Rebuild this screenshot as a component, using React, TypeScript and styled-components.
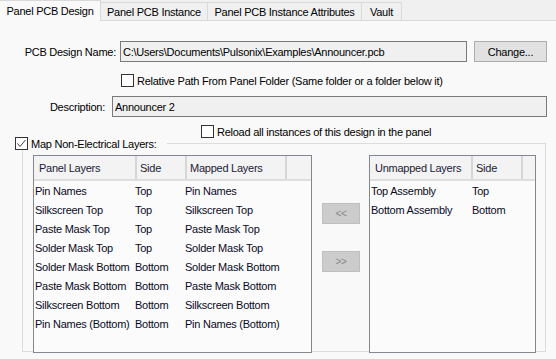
import React from 'react';
import styled, { createGlobalStyle } from 'styled-components';

const GlobalStyle = createGlobalStyle`
  html, body {
    margin: 0;
    padding: 0;
    background: #f0f0f0;
  }
  body {
    font-family: 'Liberation Sans', Arial, sans-serif;
    font-size: 11px;
    letter-spacing: -0.25px;
    color: #000;
  }
`;

const Window = styled.div`
  width: 556px;
  height: 359px;
  display: flex;
  flex-direction: column;
  overflow: hidden;
  background: #f0f0f0;
`;

const TabStrip = styled.div`
  display: flex;
  align-items: flex-end;
  height: 20px;
  flex-shrink: 0;
`;

const Tab = styled.div<{ $active?: boolean; $width: number }>`
  width: ${(p) => p.$width}px;
  height: ${(p) => (p.$active ? 21 : 18)}px;
  margin-bottom: ${(p) => (p.$active ? -1 : 0)}px;
  box-sizing: border-box;
  display: flex;
  align-items: center;
  justify-content: center;
  background: ${(p) => (p.$active ? '#f9f9f9' : '#f0f0f0')};
  border-top: 1px solid #d9d9d9;
  border-right: 1px solid #d9d9d9;
  position: relative;
  z-index: ${(p) => (p.$active ? 1 : 0)};
  white-space: nowrap;
`;

const Panel = styled.div`
  flex: 1;
  background: #f9f9f9;
  border-top: 1px solid #d9d9d9;
  display: flex;
  flex-direction: column;
`;

const Row = styled.div<{ $mt: number; $ml?: number }>`
  display: flex;
  align-items: center;
  margin-top: ${(p) => p.$mt}px;
  margin-left: ${(p) => p.$ml || 0}px;
`;

const Label = styled.div<{ $width: number; $gap: number }>`
  width: ${(p) => p.$width}px;
  margin-right: ${(p) => p.$gap}px;
  text-align: right;
  white-space: nowrap;
`;

const TextBox = styled.div<{ $width: number }>`
  width: ${(p) => p.$width}px;
  height: 21px;
  box-sizing: border-box;
  border: 1px solid #7a7a7a;
  background: #f0f0f0;
  padding-left: 2px;
  display: flex;
  align-items: center;
  white-space: nowrap;
  overflow: hidden;
`;

const PushButton = styled.div`
  width: 73px;
  height: 21px;
  margin-left: 7px;
  box-sizing: border-box;
  border: 1px solid #adadad;
  background: #e1e1e1;
  display: flex;
  align-items: center;
  justify-content: center;
`;

const Box = styled.div`
  width: 13px;
  height: 13px;
  box-sizing: border-box;
  border: 1px solid #333;
  background: #fff;
  display: flex;
  align-items: center;
  justify-content: center;
  flex-shrink: 0;
`;

const CheckLabel = styled.span`
  margin-left: 3px;
  white-space: nowrap;
`;

const Check = ({ checked, label }: { checked?: boolean; label: string }) => (
  <>
    <Box>
      {checked && (
        <svg width="11" height="11" viewBox="0 0 11 11">
          <polyline points="1.5,5.5 4,8.5 9.5,2" fill="none" stroke="#404040" strokeWidth="1" />
        </svg>
      )}
    </Box>
    <CheckLabel>{label}</CheckLabel>
  </>
);

const Group = styled.div`
  position: relative;
  margin: 5px 0 0 22px;
  width: 524px;
  box-sizing: border-box;
  border: 1px solid #dcdcdc;
  padding: 11px 9px 0 10px;
`;

const Legend = styled.div`
  position: absolute;
  top: -7px;
  left: -8px;
  display: flex;
  align-items: center;
  background: #f9f9f9;
  padding-right: 10px;
`;

const Lists = styled.div`
  display: flex;
  align-items: flex-start;
  margin-bottom: -2px;
`;

const ListView = styled.div<{ $width: number }>`
  width: ${(p) => p.$width}px;
  height: 198px;
  box-sizing: border-box;
  border: 1px solid #828790;
  background: #fbfbfb;
  display: flex;
  flex-direction: column;
`;

const HeaderRow = styled.div<{ $cols: string }>`
  display: grid;
  grid-template-columns: ${(p) => p.$cols};
  height: 25px;
  box-sizing: border-box;
  border-bottom: 2px solid #dedede;
  background: #f3f3f3;
`;

const HeadCell = styled.div`
  border-right: 2px solid #d6d6d6;
  padding-left: 3px;
  display: flex;
  align-items: center;
  white-space: nowrap;
  overflow: hidden;
  color: #1c1a36;

  &:first-child {
    padding-left: 5px;
  }
  &:last-child {
    border-right: none;
  }
`;

const DataRow = styled.div<{ $cols: string }>`
  display: grid;
  grid-template-columns: ${(p) => p.$cols};
  height: 19px;
  align-items: center;
  color: #0a0a1e;
  white-space: nowrap;

  & > span:first-child {
    padding-left: 1px;
  }
`;

const MoveColumn = styled.div`
  width: 38px;
  margin: 0 9px 0 10px;
  padding-top: 48px;
  display: flex;
  flex-direction: column;
  gap: 27px;
`;

const MoveButton = styled.div`
  height: 21px;
  box-sizing: border-box;
  border: 1px solid #bfbfbf;
  background: #cccccc;
  color: #838383;
  font-size: 10px;
  display: flex;
  align-items: center;
  justify-content: center;
`;

const mapped = [
  ['Pin Names', 'Top', 'Pin Names'],
  ['Silkscreen Top', 'Top', 'Silkscreen Top'],
  ['Paste Mask Top', 'Top', 'Paste Mask Top'],
  ['Solder Mask Top', 'Top', 'Solder Mask Top'],
  ['Solder Mask Bottom', 'Bottom', 'Solder Mask Bottom'],
  ['Paste Mask Bottom', 'Bottom', 'Paste Mask Bottom'],
  ['Silkscreen Bottom', 'Bottom', 'Silkscreen Bottom'],
  ['Pin Names (Bottom)', 'Bottom', 'Pin Names (Bottom)'],
];

const unmapped = [
  ['Top Assembly', 'Top'],
  ['Bottom Assembly', 'Bottom'],
];

const App = () => {
  return (
    <Window>
      <GlobalStyle />
      <TabStrip>
        <Tab $active $width={101}>Panel PCB Design</Tab>
        <Tab $width={107}>Panel PCB Instance</Tab>
        <Tab $width={154}>Panel PCB Instance Attributes</Tab>
        <Tab $width={40}>Vault</Tab>
      </TabStrip>
      <Panel>
        <Row $mt={20}>
          <Label $width={116} $gap={4}>PCB Design Name:</Label>
          <TextBox $width={347}>C:\Users\Documents\Pulsonix\Examples\Announcer.pcb</TextBox>
          <PushButton>Change...</PushButton>
        </Row>
        <Row $mt={12} $ml={121}>
          <Check label="Relative Path From Panel Folder (Same folder or a folder below it)" />
        </Row>
        <Row $mt={9}>
          <Label $width={105} $gap={7}>Description:</Label>
          <TextBox $width={435}>Announcer 2</TextBox>
        </Row>
        <Row $mt={8} $ml={201}>
          <Check label="Reload all instances of this design in the panel" />
        </Row>
        <Group>
          <Legend>
            <Check checked label="Map Non-Electrical Layers:" />
          </Legend>
          <Lists>
            <ListView $width={279}>
              <HeaderRow $cols="103px 50px 100px 1fr">
                <HeadCell>Panel Layers</HeadCell>
                <HeadCell>Side</HeadCell>
                <HeadCell>Mapped Layers</HeadCell>
                <HeadCell />
              </HeaderRow>
              {mapped.map((r) => (
                <DataRow key={r[0]} $cols="101px 50px 1fr">
                  <span>{r[0]}</span>
                  <span>{r[1]}</span>
                  <span>{r[2]}</span>
                </DataRow>
              ))}
            </ListView>
            <MoveColumn>
              <MoveButton>&lt;&lt;</MoveButton>
              <MoveButton>&gt;&gt;</MoveButton>
            </MoveColumn>
            <ListView $width={167}>
              <HeaderRow $cols="103px 50px 1fr">
                <HeadCell>Unmapped Layers</HeadCell>
                <HeadCell>Side</HeadCell>
                <HeadCell />
              </HeaderRow>
              {unmapped.map((r) => (
                <DataRow key={r[0]} $cols="102px 1fr">
                  <span>{r[0]}</span>
                  <span>{r[1]}</span>
                </DataRow>
              ))}
            </ListView>
          </Lists>
        </Group>
      </Panel>
    </Window>
  );
};

export default App;
